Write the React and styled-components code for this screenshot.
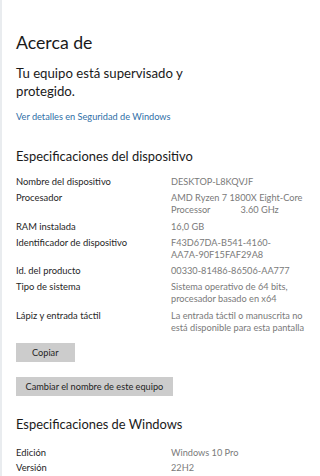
import React from "react";
import styled, { createGlobalStyle } from "styled-components";

const Global = createGlobalStyle`
  html, body { margin: 0; padding: 0; background: #fff; }
  body { font-family: "Lato", "Noto Sans", sans-serif; }
  * { box-sizing: border-box; }
`;

const Page = styled.div`
  width: 320px;
  height: 476px;
  overflow: hidden;
  background: #fff;
  border-left: 2px solid #e9ecef;
  padding: 30px 0 0 14px;
`;

const Title = styled.h1`
  margin: 0;
  font-weight: 400;
  font-size: 17.7px;
  line-height: 26px;
  color: #1a1a1a;
`;

const Status = styled.p`
  margin: 8px 0 0;
  font-size: 13.2px;
  line-height: 18px;
  color: #1a1a1a;
  width: 190px;
`;

const Link = styled.a`
  display: block;
  margin-top: 10px;
  font-size: 9.2px;
  line-height: 14px;
  color: #2f6fa7;
  text-decoration: none;
`;

const Heading = styled.h2`
  margin: ${(p) => p.$top}px 0 0;
  font-weight: 400;
  font-size: 12.9px;
  line-height: 20px;
  color: #1a1a1a;
`;

const Specs = styled.div`
  margin-top: ${(p) => p.$top}px;
  display: flex;
  flex-direction: column;
  gap: ${(p) => p.$gap}px;
`;

const Row = styled.div`
  display: grid;
  grid-template-columns: 155px 1fr;
  font-size: 9.4px;
  line-height: 12px;
`;

const Label = styled.div`
  color: #262626;
`;

const Value = styled.div`
  color: #7a7a7a;
  font-size: 9.2px;
  white-space: nowrap;
`;

const Gap = styled.span`
  display: inline-block;
  width: 30px;
`;

const Button = styled.button`
  display: block;
  margin-top: ${(p) => p.$top}px;
  height: 19px;
  padding: 0 ${(p) => p.$pad}px;
  border: none;
  background: #cccccc;
  font-family: inherit;
  font-size: 9.2px;
  color: #1f1f1f;
  cursor: pointer;
`;

const device = [
  ["Nombre del dispositivo", "DESKTOP-L8KQVJF"],
  [
    "Procesador",
    <>
      AMD Ryzen 7 1800X Eight-Core
      <br />
      Processor<Gap />3.60 GHz
    </>,
  ],
  ["RAM instalada", "16,0 GB"],
  [
    "Identificador de dispositivo",
    <>
      F43D67DA-B541-4160-
      <br />
      AA7A-90F15FAF29A8
    </>,
  ],
  ["Id. del producto", "00330-81486-86506-AA777"],
  [
    "Tipo de sistema",
    <>
      Sistema operativo de 64 bits,
      <br />
      procesador basado en x64
    </>,
  ],
  [
    "Lápiz y entrada táctil",
    <>
      La entrada táctil o manuscrita no
      <br />
      está disponible para esta pantalla
    </>,
  ],
];

const windows = [
  ["Edición", "Windows 10 Pro"],
  ["Versión", "22H2"],
];

export default function App() {
  return (
    <>
      <Global />
      <Page>
        <Title>Acerca de</Title>
        <Status>Tu equipo está supervisado y protegido.</Status>
        <Link href="#">Ver detalles en Seguridad de Windows</Link>
        <Heading $top={22}>Especificaciones del dispositivo</Heading>
        <Specs $top={10} $gap={4.3}>
          {device.map(([l, v]) => (
            <Row key={l}>
              <Label>{l}</Label>
              <Value>{v}</Value>
            </Row>
          ))}
        </Specs>
        <Button $top={9} $pad={16}>Copiar</Button>
        <Button $top={15} $pad={9.5}>Cambiar el nombre de este equipo</Button>
        <Heading $top={18}>Especificaciones de Windows</Heading>
        <Specs $top={13} $gap={3}>
          {windows.map(([l, v]) => (
            <Row key={l}>
              <Label>{l}</Label>
              <Value>{v}</Value>
            </Row>
          ))}
        </Specs>
      </Page>
    </>
  );
}
